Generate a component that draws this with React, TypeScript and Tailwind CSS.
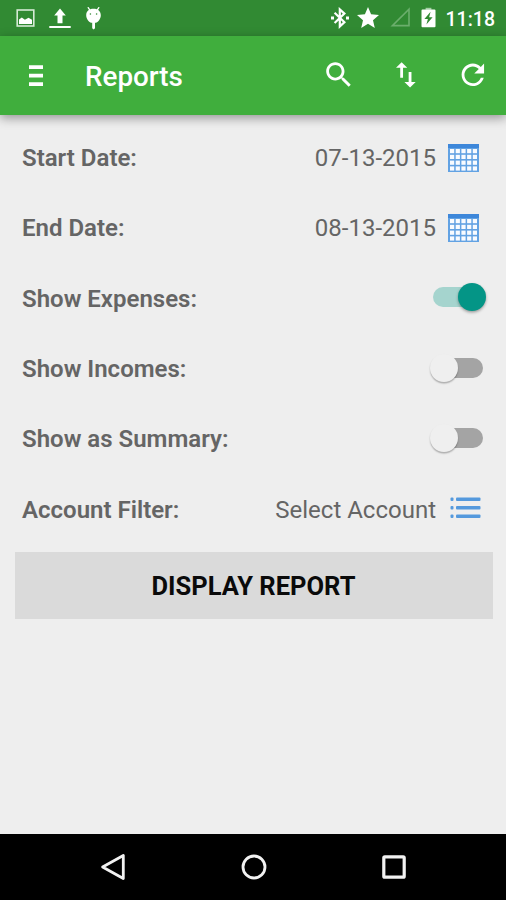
import type { ReactNode } from "react";

function StatusBar() {
  return (
    <div className="flex h-[35.5px] items-center bg-[#318a33] pl-[16px] pr-[11px] text-white">
      <svg width="19" height="18" viewBox="0 0 19 18" fill="none">
        <rect x="1.2" y="1" width="16.6" height="16" stroke="#d5ead5" strokeWidth="1.6" />
        <path d="M3 15v-4.6l2.8-1.9 3.1 2.2 3.6-1.9 3.5 2V15z" fill="currentColor" />
      </svg>
      <svg className="ml-[14px]" width="22" height="22" viewBox="0 0 22 22" fill="currentColor">
        <path d="M11 1.5 5.2 8.4h3.3v7.8h5V8.4h3.3zM.3 18.9h21.4v2H.3z" />
      </svg>
      <svg className="ml-[13.5px]" width="17" height="24" viewBox="0 0 17 24" fill="none">
        <path d="m3.2 1.6 2 3M13.8 1.6l-2 3" stroke="white" strokeWidth="1.3" strokeLinecap="round" />
        <path d="M8.5 2.8c4.6 0 7.3 2.6 7.3 6.4 0 4-3 7.4-5.8 7.6v5.4L8.6 23.6 7.2 22.2v-5.4C4.2 16.6 1.2 13.2 1.2 9.2c0-3.8 2.7-6.4 7.3-6.4z" fill="white" />
        <circle cx="5.4" cy="8" r=".8" fill="#318a33" />
        <circle cx="11.6" cy="8" r=".8" fill="#318a33" />
      </svg>

      <div className="ml-auto flex items-center">
        <svg width="20" height="22" viewBox="0 0 20 22" fill="none" stroke="currentColor" strokeWidth="2.2">
          <path d="m4.6 5.8 9.8 9.4-4.6 4.2V2.4l4.6 4.2-9.8 9.4" />
          <path d="M1 11h3M16 11h3" strokeWidth="2.8" />
        </svg>
        <svg className="ml-[7px]" width="22" height="21" viewBox="2 2 20 19" fill="currentColor">
          <path d="M12 17.27 18.18 21l-1.64-7.03L22 9.24l-7.19-.61L12 2 9.19 8.63 2 9.24l5.46 4.73L5.82 21z" />
        </svg>
        <svg className="ml-[11px]" width="21" height="21" viewBox="0 0 21 21" fill="none">
          <path d="M19 2.2v16.4H2.4z" stroke="#6bae6c" strokeWidth="1.6" />
        </svg>
        <svg className="ml-[10px]" width="15" height="21" viewBox="0 0 15 21">
          <path d="M4.6.8h5.8v2H4.6z" fill="#a4cfa5" />
          <path d="M1.5 2.4h12a1 1 0 0 1 1 1v15.8a1 1 0 0 1-1 1h-12a1 1 0 0 1-1-1V3.4a1 1 0 0 1 1-1z" fill="white" />
          <path d="M9.6 4.8 3.4 12h3.5l-1.5 5.6 6.2-7.4H8.1z" fill="#318a33" />
        </svg>
        <span className="ml-[9.5px] mt-[3px] text-[19.5px] leading-none font-medium">11:18</span>
      </div>
    </div>
  );
}

function ActionIcon({ d }: { d: string }) {
  return (
    <svg width="33.7" height="33.7" viewBox="0 0 24 24" fill="currentColor">
      <path d={d} />
    </svg>
  );
}

function AppBar() {
  return (
    <header className="relative flex h-[79px] items-center bg-[#40ae3d] pl-[28.5px] pr-[16px] text-white shadow-[0_3px_10px_rgba(0,0,0,0.38)]">
      <svg className="mt-[2px]" width="14" height="22" viewBox="0 0 14 22" fill="currentColor">
        <path d="M0 .3h14v3.7H0zM0 8.8h14v3.7H0zM0 17.3h14V21H0z" />
      </svg>
      <h1 className="ml-[42.5px] mt-[3px] text-[27.8px] leading-none font-medium">Reports</h1>
      <div className="ml-auto flex gap-[33.7px]">
        <ActionIcon d="M15.5 14h-.79l-.28-.27C15.41 12.59 16 11.11 16 9.5 16 5.91 13.09 3 9.5 3S3 5.91 3 9.5 5.91 16 9.5 16c1.61 0 3.09-.59 4.23-1.57l.27.28v.79l5 4.99L20.49 19l-4.99-5zm-6 0C7.01 14 5 11.99 5 9.5S7.01 5 9.5 5 14 7.01 14 9.5 11.99 14 9.5 14z" />
        <ActionIcon d="M16 17.01V10h-2v7.01h-3L15 21l4-3.99h-3zM9 3L5 6.99h3V14h2V6.99h3L9 3z" />
        <ActionIcon d="M17.65 6.35C16.2 4.9 14.21 4 12 4c-4.42 0-7.99 3.58-7.99 8s3.57 8 7.99 8c3.73 0 6.84-2.55 7.73-6h-2.08c-.82 2.33-3.04 4-5.65 4-3.31 0-6-2.69-6-6s2.69-6 6-6c1.66 0 3.14.69 4.22 1.78L13 11h7V4l-2.35 2.35z" />
      </div>
    </header>
  );
}

function Row({ label, children }: { label: string; children: ReactNode }) {
  return (
    <div className="flex h-[70.3px] items-center pl-[22px] pr-[20px]">
      <span className="text-[24px] leading-none font-semibold text-[#656565]">{label}</span>
      <div className="ml-auto flex items-center">{children}</div>
    </div>
  );
}

function Value({ children }: { children: ReactNode }) {
  return <span className="text-[24px] leading-none text-[#656565]">{children}</span>;
}

function CalendarIcon() {
  return (
    <svg className="-mt-px ml-[12px] mr-[7px]" width="31" height="28" viewBox="0 0 31 28">
      <path d="M0 0h31v28H0z" fill="#62a2e3" />
      <path d="M0 0h31v4H0z" fill="#3d87da" />
      {[5, 10.8, 16.6, 22.4].map((y) =>
        [2, 7.7, 13.4, 19.1, 24.8].map((x) => (
          <rect key={`${x}-${y}`} x={x} y={y} width="4.2" height="4.2" fill="#f8fbff" />
        ))
      )}
    </svg>
  );
}

function ListIcon() {
  return (
    <svg className="-mt-[3px] ml-[14px] mr-[5px]" width="31" height="22" viewBox="0 0 31 22" fill="#5499dd">
      {[0.5, 9, 17.5].map((y) => (
        <g key={y}>
          <rect x="0.5" y={y} width="3" height="3.4" rx="1" />
          <rect x="6" y={y} width="24.5" height="3.4" rx="1" />
        </g>
      ))}
    </svg>
  );
}

function Toggle({ on }: { on?: boolean }) {
  if (on) {
    return (
      <div className="-mt-[4px] flex h-[28px] w-[53px] items-center justify-end">
        <span className="-mr-[14px] h-[20px] w-[39px] rounded-full bg-[#a5d4ce]" />
        <span className="relative h-[28px] w-[28px] rounded-full bg-[#049586] shadow-[0_1.5px_3px_rgba(0,0,0,0.35)]" />
      </div>
    );
  }
  return (
    <div className="-mt-[3px] mr-[3px] flex h-[29px] w-[53px] items-center">
      <span className="relative h-[28px] w-[28px] shrink-0 rounded-full bg-[#efefef] shadow-[0_1.5px_1.5px_rgba(0,0,0,0.28)]" />
      <span className="-ml-[14px] h-[20px] w-[39px] rounded-full bg-[#a4a4a4]" />
    </div>
  );
}

function NavBar() {
  return (
    <nav className="mt-auto flex h-[66.5px] items-center justify-between bg-black pl-[100px] pr-[99px] text-[#f2f2f2]">
      <svg width="26" height="28" viewBox="0 0 26 28" fill="none" stroke="currentColor" strokeWidth="2.8" strokeLinejoin="round">
        <path d="M23.3 2.5v23L2.6 14z" />
      </svg>
      <svg width="26" height="26" viewBox="0 0 26 26" fill="none" stroke="currentColor" strokeWidth="2.8">
        <circle cx="13" cy="13" r="11" />
      </svg>
      <svg width="26" height="26" viewBox="0 0 26 26" fill="none" stroke="currentColor" strokeWidth="3.2">
        <rect x="2.8" y="2.8" width="20.4" height="20.4" rx="1" />
      </svg>
    </nav>
  );
}

export default function App() {
  return (
    <div className="flex h-[900px] w-[506px] flex-col overflow-hidden bg-[#eeeeee] font-['Roboto',sans-serif]">
      <StatusBar />
      <AppBar />

      <main className="pt-[8.5px]">
        <Row label="Start Date:">
          <Value>07-13-2015</Value>
          <CalendarIcon />
        </Row>
        <Row label="End Date:">
          <Value>08-13-2015</Value>
          <CalendarIcon />
        </Row>
        <Row label="Show Expenses:">
          <Toggle on />
        </Row>
        <Row label="Show Incomes:">
          <Toggle />
        </Row>
        <Row label="Show as Summary:">
          <Toggle />
        </Row>
        <Row label="Account Filter:">
          <Value>Select Account</Value>
          <ListIcon />
        </Row>
        <div className="pl-[14.5px] pr-[13.5px] pt-[7px]">
          <button className="flex h-[67.5px] w-full items-center justify-center bg-[#dadada] pt-[2px] text-[25.5px] leading-none font-bold text-[#0a0a0a]">
            DISPLAY REPORT
          </button>
        </div>
      </main>

      <NavBar />
    </div>
  );
}
